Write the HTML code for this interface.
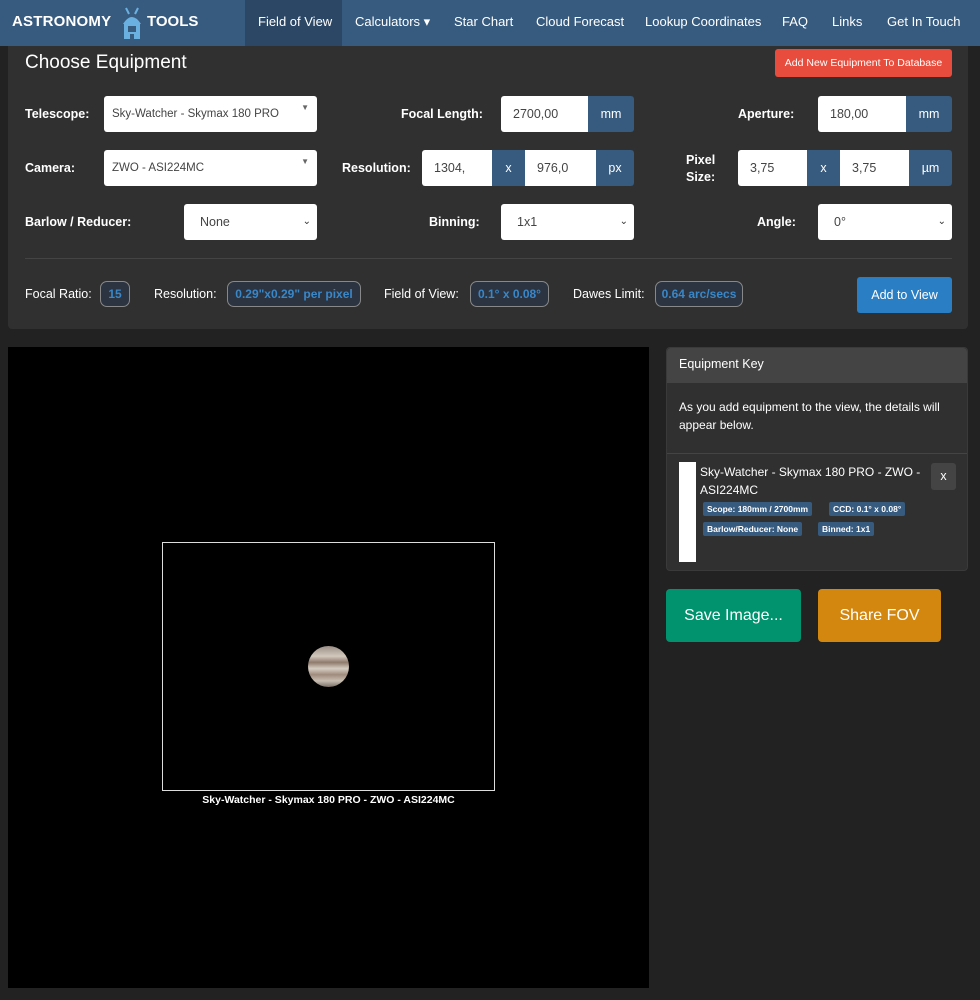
<!DOCTYPE html>
<html><head><meta charset="utf-8"><style>
*{box-sizing:border-box;margin:0;padding:0}
body{width:980px;height:1000px;background:#222;font-family:"Liberation Sans",sans-serif;color:#fff;position:relative;overflow:hidden;font-size:12.5px}
.a{position:absolute}
.nav{left:0;top:0;width:980px;height:46px;background:#375a7f}
.nl{top:0;height:46px;line-height:44px;font-size:13px;color:#fff}
.panel{left:8px;top:46px;width:960px;height:283px;background:#303030;border-radius:0 0 4px 4px}
.lbl{font-weight:bold;font-size:12.5px;color:#fff}
.inp{background:#fff;color:#444;font-size:12.5px;height:36px;line-height:36px;padding-left:12px;border-radius:3px}
.add{background:#375a7f;color:#fff;height:36px;line-height:36px;text-align:center;font-size:12.5px}
.bd{border:1px solid #888;border-radius:7px;height:26px;line-height:24px;color:#3a87c8;font-weight:bold;font-size:12px;padding:0 5px;background:#2b3440}
.tag{background:#375a7f;font-size:9px;font-weight:bold;height:14px;line-height:14px;padding:0 4px;border-radius:2px}
</style></head><body>
<div class="a nav"></div>
<div class="a" style="left:12px;top:13px;font-weight:900;font-size:15px;letter-spacing:0.2px">ASTRONOMY</div>
<svg class="a" style="left:118px;top:6px" width="28" height="34"><line x1="8" y1="2" x2="11" y2="8" stroke="#6ab0e0" stroke-width="2"/><line x1="20" y1="2" x2="17" y2="8" stroke="#6ab0e0" stroke-width="2"/><path d="M5 18 Q14 4 23 18Z" fill="#6ab0e0"/><rect x="6" y="18" width="16" height="10" fill="#6ab0e0"/><rect x="10" y="20" width="8" height="6" fill="#375a7f"/><rect x="6" y="28" width="6" height="5" fill="#6ab0e0"/><rect x="16" y="28" width="6" height="5" fill="#6ab0e0"/></svg>
<div class="a" style="left:147px;top:13px;font-weight:900;font-size:15px">TOOLS</div>
<div class="a" style="left:245px;top:0;width:97px;height:46px;background:#2b4765"></div>
<div class="a nl" style="left:258px">Field of View</div>
<div class="a nl" style="left:355px">Calculators ▾</div>
<div class="a nl" style="left:454px">Star Chart</div>
<div class="a nl" style="left:536px">Cloud Forecast</div>
<div class="a nl" style="left:645px">Lookup Coordinates</div>
<div class="a nl" style="left:782px">FAQ</div>
<div class="a nl" style="left:832px">Links</div>
<div class="a nl" style="left:887px">Get In Touch</div>

<div class="a panel"></div>
<div class="a" style="left:25px;top:52px;font-size:19px">Choose Equipment</div>
<div class="a" style="left:775px;top:49px;width:177px;height:28px;background:#e74c3c;border-radius:3px;font-size:10.5px;line-height:28px;text-align:center">Add New Equipment To Database</div>

<div class="a lbl" style="left:25px;top:107px">Telescope:</div>
<div class="a inp" style="left:104px;top:96px;width:213px;font-size:11.5px;padding-left:8px">Sky-Watcher - Skymax 180 PRO<span style="position:absolute;right:8px;top:-6px;font-size:8px;color:#666">▼</span></div>
<div class="a lbl" style="left:401px;top:107px">Focal Length:</div>
<div class="a inp" style="left:501px;top:96px;width:87px;border-radius:3px 0 0 3px">2700,00</div>
<div class="a add" style="left:588px;top:96px;width:46px;border-radius:0 3px 3px 0">mm</div>
<div class="a lbl" style="left:738px;top:107px">Aperture:</div>
<div class="a inp" style="left:818px;top:96px;width:88px;border-radius:3px 0 0 3px">180,00</div>
<div class="a add" style="left:906px;top:96px;width:46px;border-radius:0 3px 3px 0">mm</div>

<div class="a lbl" style="left:25px;top:161px">Camera:</div>
<div class="a inp" style="left:104px;top:150px;width:213px;font-size:11.5px;padding-left:8px">ZWO - ASI224MC<span style="position:absolute;right:8px;top:-6px;font-size:8px;color:#666">▼</span></div>
<div class="a lbl" style="left:342px;top:161px">Resolution:</div>
<div class="a inp" style="left:422px;top:150px;width:70px;border-radius:3px 0 0 3px">1304,</div>
<div class="a add" style="left:492px;top:150px;width:33px">x</div>
<div class="a inp" style="left:525px;top:150px;width:71px;border-radius:0">976,0</div>
<div class="a add" style="left:596px;top:150px;width:38px;border-radius:0 3px 3px 0">px</div>
<div class="a lbl" style="left:686px;top:152px;line-height:17px;text-align:center">Pixel<br>Size:</div>
<div class="a inp" style="left:738px;top:150px;width:69px;border-radius:3px 0 0 3px">3,75</div>
<div class="a add" style="left:807px;top:150px;width:33px">x</div>
<div class="a inp" style="left:840px;top:150px;width:69px;border-radius:0">3,75</div>
<div class="a add" style="left:909px;top:150px;width:43px;border-radius:0 3px 3px 0">µm</div>

<div class="a lbl" style="left:25px;top:215px">Barlow / Reducer:</div>
<div class="a inp" style="left:184px;top:204px;width:133px;padding-left:16px">None<span style="position:absolute;right:6px;top:0;font-size:10px;color:#333">⌄</span></div>
<div class="a lbl" style="left:429px;top:215px">Binning:</div>
<div class="a inp" style="left:501px;top:204px;width:133px;padding-left:16px">1x1<span style="position:absolute;right:6px;top:0;font-size:10px;color:#333">⌄</span></div>
<div class="a lbl" style="left:757px;top:215px">Angle:</div>
<div class="a inp" style="left:818px;top:204px;width:134px;padding-left:16px">0°<span style="position:absolute;right:6px;top:0;font-size:10px;color:#333">⌄</span></div>

<div class="a" style="left:25px;top:258px;width:927px;height:1px;background:#444"></div>
<div class="a" style="left:25px;top:287px">Focal Ratio:</div>
<div class="a bd" style="left:100px;top:281px;width:30px;text-align:center;padding:0">15</div>
<div class="a" style="left:154px;top:287px">Resolution:</div>
<div class="a bd" style="left:227px;top:281px;width:134px;text-align:center;padding:0">0.29"x0.29" per pixel</div>
<div class="a" style="left:384px;top:287px">Field of View:</div>
<div class="a bd" style="left:470px;top:281px;width:79px;text-align:center;padding:0">0.1° x 0.08°</div>
<div class="a" style="left:573px;top:287px">Dawes Limit:</div>
<div class="a bd" style="left:655px;top:281px;width:88px;text-align:center;padding:0">0.64 arc/secs</div>
<div class="a" style="left:857px;top:277px;width:95px;height:36px;background:#2a7fc4;border-radius:3px;line-height:36px;text-align:center">Add to View</div>

<div class="a" style="left:8px;top:347px;width:641px;height:641px;background:#000"></div>
<div class="a" style="left:162px;top:542px;width:333px;height:249px;border:1px solid #ddd"></div>
<div class="a" style="left:308px;top:646px;width:41px;height:41px;border-radius:50%;background:linear-gradient(180deg,#9a8e86 0%,#d2c8bc 25%,#8e7a6c 40%,#d6cdc2 55%,#a08c7e 70%,#c8beb2 85%,#7a7068 100%)"></div>
<div class="a" style="left:162px;top:794px;width:333px;text-align:center;font-size:10.5px;font-weight:bold">Sky-Watcher - Skymax 180 PRO - ZWO - ASI224MC</div>

<div class="a" style="left:666px;top:347px;width:302px;height:224px;background:#303030;border:1px solid #3a3a3a;border-radius:4px"></div>
<div class="a" style="left:667px;top:348px;width:300px;height:35px;background:#444;border-radius:4px 4px 0 0"></div>
<div class="a" style="left:679px;top:357px">Equipment Key</div>
<div class="a" style="left:679px;top:398px;line-height:18px;font-size:12px">As you add equipment to the view, the details will<br>appear below.</div>
<div class="a" style="left:667px;top:453px;width:300px;height:1px;background:#444"></div>
<div class="a" style="left:679px;top:462px;width:17px;height:100px;background:#fff"></div>
<div class="a" style="left:700px;top:463px;line-height:18px;font-size:12px">Sky-Watcher - Skymax 180 PRO - ZWO -<br>ASI224MC</div>
<div class="a" style="left:931px;top:463px;width:25px;height:27px;background:#444;border-radius:3px;text-align:center;line-height:27px">x</div>
<div class="a tag" style="left:703px;top:502px;font-size:8.5px">Scope: 180mm / 2700mm</div>
<div class="a tag" style="left:829px;top:502px;font-size:8.5px">CCD: 0.1° x 0.08°</div>
<div class="a tag" style="left:703px;top:522px;font-size:8.5px">Barlow/Reducer: None</div>
<div class="a tag" style="left:818px;top:522px;font-size:8.5px">Binned: 1x1</div>

<div class="a" style="left:666px;top:589px;width:135px;height:53px;background:#00936d;border-radius:4px;text-align:center;line-height:53px;font-size:16px">Save Image...</div>
<div class="a" style="left:818px;top:589px;width:123px;height:53px;background:#d4870e;border-radius:4px;text-align:center;line-height:53px;font-size:16px">Share FOV</div>
</body></html>
